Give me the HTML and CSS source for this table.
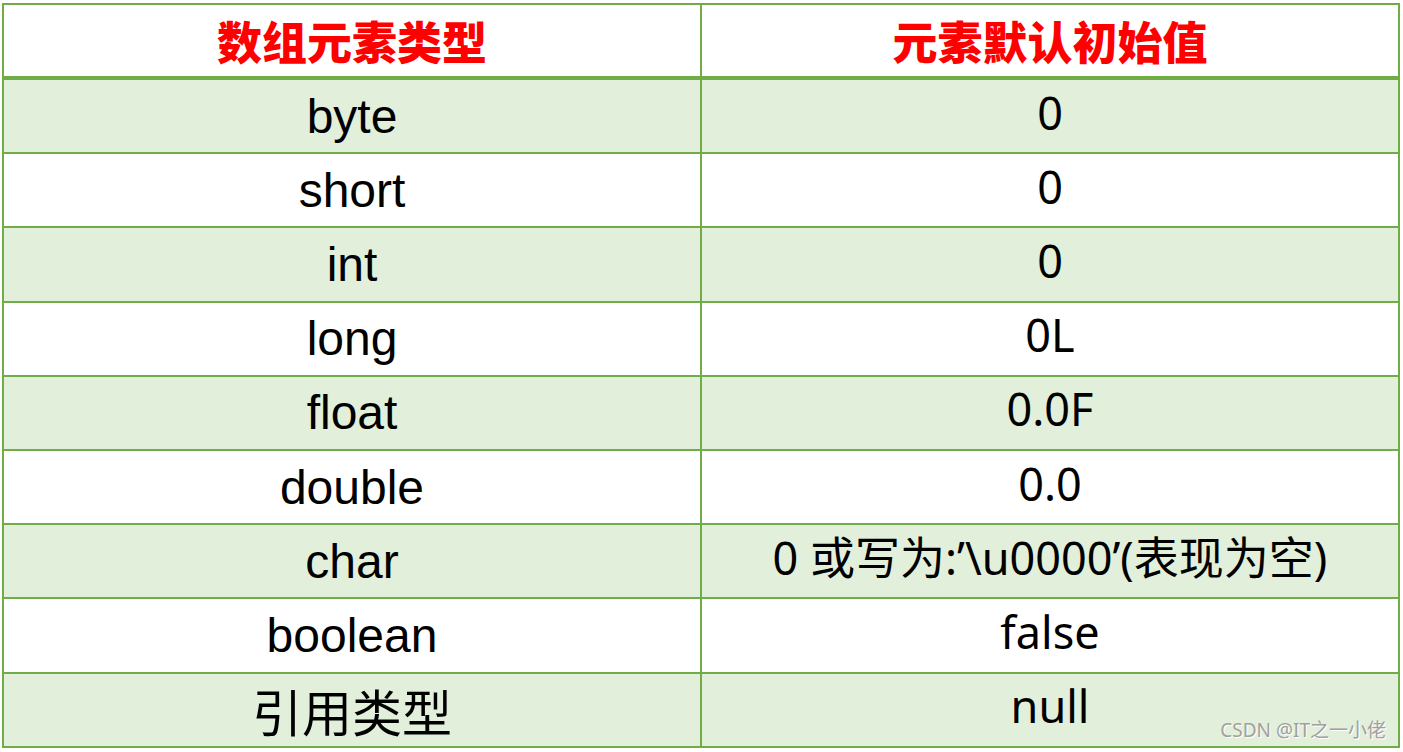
FILE: index.html
```html
<!DOCTYPE html>
<html lang="zh-CN">
<head>
<meta charset="utf-8">
<title>数组元素默认初始值</title>
<link rel="stylesheet" href="styles.css">
</head>
<body>
<div class="sheet">
  <div class="row head">
    <div class="cell left">数组元素类型</div>
    <div class="cell right">元素默认初始值</div>
  </div>
  <div class="row fill">
    <div class="cell left">byte</div>
    <div class="cell right">0</div>
  </div>
  <div class="row">
    <div class="cell left">short</div>
    <div class="cell right">0</div>
  </div>
  <div class="row fill">
    <div class="cell left">int</div>
    <div class="cell right">0</div>
  </div>
  <div class="row">
    <div class="cell left">long</div>
    <div class="cell right">0L</div>
  </div>
  <div class="row fill">
    <div class="cell left">float</div>
    <div class="cell right">0.0F</div>
  </div>
  <div class="row">
    <div class="cell left">double</div>
    <div class="cell right">0.0</div>
  </div>
  <div class="row fill">
    <div class="cell left">char</div>
    <div class="cell right">0 或写为:’\u0000’(表现为空)</div>
  </div>
  <div class="row">
    <div class="cell left">boolean</div>
    <div class="cell right">false</div>
  </div>
  <div class="row fill last">
    <div class="cell left cjk">引用类型</div>
    <div class="cell right">null</div>
    <span class="mark">CSDN @IT之一小佬</span>
  </div>
</div>
</body>
</html>
```
FILE: styles.css
```css
html, body {
  margin: 0;
  padding: 0;
  background: #ffffff;
}
.sheet {
  margin: 3px 0 0 2px;
  width: 1398px;
  box-sizing: border-box;
  border: 2px solid #70ad47;
  display: flex;
  flex-direction: column;
}
.row {
  display: flex;
  height: 74.2px;
  box-sizing: border-box;
  border-bottom: 2px solid #70ad47;
  background: #ffffff;
  position: relative;
}
.row.head {
  height: 75px;
  border-bottom: 4px solid #70ad47;
}
.row.fill {
  background: #e2efda;
}
.row.last {
  border-bottom: none;
  height: 72.2px;
}
.cell {
  display: flex;
  align-items: center;
  justify-content: center;
  color: #000000;
  white-space: nowrap;
}
.cell.left {
  width: 698px;
  box-sizing: border-box;
  border-right: 2px solid #70ad47;
  font-family: "Liberation Sans", "Noto Sans CJK SC", sans-serif;
  font-size: 48px;
}
.cell.left.cjk {
  font-size: 50px;
}
.cell.right {
  flex: 1;
  font-family: "Noto Sans", "Noto Sans CJK SC", sans-serif;
  font-size: 45px;
  line-height: 1;
  padding-bottom: 8px;
}
.row.head .cell {
  color: #ff0000;
  font-family: "Noto Sans CJK SC", sans-serif;
  font-weight: 900;
  font-size: 45px;
  line-height: normal;
  padding-bottom: 0;
}
.mark {
  position: absolute;
  right: 12px;
  bottom: 3px;
  font-family: "Noto Sans", "Noto Sans CJK SC", sans-serif;
  font-size: 19px;
  color: #a0a0a0;
  text-shadow: 1px 1px 0 #ffffff;
}
```
